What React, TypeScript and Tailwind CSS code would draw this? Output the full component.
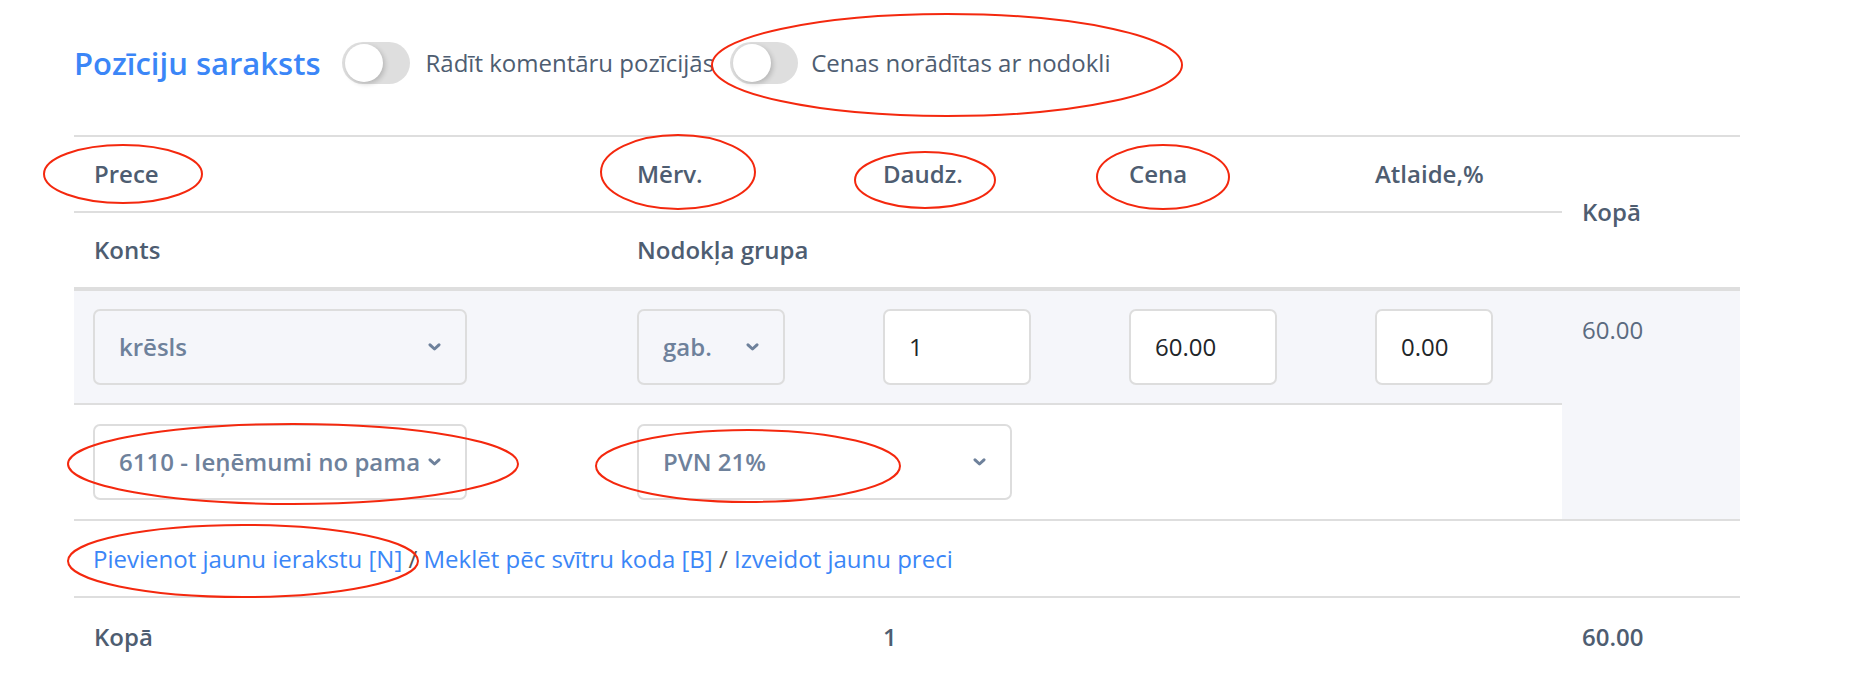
import React from "react";

const Chevron: React.FC = () => (
    <svg width="13" height="8" viewBox="0 0 13 8" className="shrink-0">
        <path d="M2 1.8 L6.5 6 L11 1.8" fill="none" stroke="#6e819b" strokeWidth="3" strokeLinecap="round" strokeLinejoin="round" />
    </svg>
);

const Toggle: React.FC = () => (
    <div className="flex items-center w-[68px] h-[42px] rounded-full bg-[#dedede] pl-[3px] shrink-0">
        <div className="w-[38px] h-[38px] rounded-full bg-white shadow-[2px_2px_5px_rgba(0,0,0,0.18)]" />
    </div>
);

interface SelectProps {
    value: string;
    width: string;
}

const FakeSelect: React.FC<SelectProps> = ({ value, width }) => (
    <div className={`${width} h-[76px] flex items-center justify-between gap-[8px] pl-[24px] pr-[24px] border-2 border-[#dddddd] rounded-[7px] text-[24px] font-semibold text-[#6e819b]`}>
        <span className="whitespace-nowrap">{value}</span>
        <Chevron />
    </div>
);

const FakeInput: React.FC<{ value: string; width: string }> = ({ value, width }) => (
    <div className={`${width} h-[76px] flex items-center pl-[24px] bg-white border-2 border-[#dddddd] rounded-[7px] text-[24px] text-[#212529]`}>
        {value}
    </div>
);

const Annotations: React.FC = () => (
    <svg className="absolute inset-0 pointer-events-none" width="1876" height="674">
        <g fill="none" stroke="#f4280e" strokeWidth="2">
            <ellipse cx="947" cy="65" rx="235" ry="51" />
            <ellipse cx="123" cy="174" rx="79" ry="29" />
            <ellipse cx="678" cy="172" rx="77" ry="37" />
            <ellipse cx="925" cy="180" rx="70" ry="28" />
            <ellipse cx="1163" cy="177" rx="66" ry="32" />
            <ellipse cx="293" cy="464" rx="225" ry="40" />
            <ellipse cx="748" cy="466" rx="152" ry="36" />
            <ellipse cx="243" cy="561" rx="175" ry="36" />
        </g>
    </svg>
);

export default function App() {
    const th = "flex items-center pl-[20px] text-[24px] font-semibold text-[#4e5d71]";
    return (
        <div className="relative w-full h-[674px] bg-white overflow-hidden font-['Open_Sans',sans-serif]">
            <div className="pl-[74px] pt-[41px]">
                <div className="flex items-center h-[44px]">
                    <span className="text-[31px] font-semibold text-[#3b86f7] mr-[21px]">Pozīciju saraksts</span>
                    <Toggle />
                    <span className="ml-[16px] mr-[16px] text-[24px] text-[#4e5d71]">Rādīt komentāru pozīcijās</span>
                    <Toggle />
                    <span className="ml-[13px] text-[24px] text-[#4e5d71]">Cenas norādītas ar nodokli</span>
                </div>

                <div className="mt-[50px] w-[1666px] grid grid-cols-[543px_246px_246px_246px_207px_178px]">
                    {/* header row 1 */}
                    <div className={`${th} h-[78px] border-y-2 border-[#dedede]`}>Prece</div>
                    <div className={`${th} h-[78px] border-y-2 border-[#dedede]`}>Mērv.</div>
                    <div className={`${th} h-[78px] border-y-2 border-[#dedede]`}>Daudz.</div>
                    <div className={`${th} h-[78px] border-y-2 border-[#dedede]`}>Cena</div>
                    <div className={`${th} h-[78px] border-y-2 border-[#dedede]`}>Atlaide,%</div>
                    <div className={`${th} row-span-2 border-t-2 border-b-4 border-[#dedede]`}>Kopā</div>
                    {/* header row 2 */}
                    <div className={`${th} h-[78px] border-b-4 border-[#dedede]`}>Konts</div>
                    <div className={`${th} col-span-4 h-[78px] border-b-4 border-[#dedede]`}>Nodokļa grupa</div>

                    {/* item row 1 */}
                    <div className="h-[114px] pl-[19px] pt-[18px] bg-[#f5f6fa] border-b-2 border-[#dedede]">
                        <FakeSelect value="krēsls" width="w-[374px]" />
                    </div>
                    <div className="h-[114px] pl-[20px] pt-[18px] bg-[#f5f6fa] border-b-2 border-[#dedede]">
                        <FakeSelect value="gab." width="w-[148px]" />
                    </div>
                    <div className="h-[114px] pl-[20px] pt-[18px] bg-[#f5f6fa] border-b-2 border-[#dedede]">
                        <FakeInput value="1" width="w-[148px]" />
                    </div>
                    <div className="h-[114px] pl-[20px] pt-[18px] bg-[#f5f6fa] border-b-2 border-[#dedede]">
                        <FakeInput value="60.00" width="w-[148px]" />
                    </div>
                    <div className="h-[114px] pl-[20px] pt-[18px] bg-[#f5f6fa] border-b-2 border-[#dedede]">
                        <FakeInput value="0.00" width="w-[118px]" />
                    </div>
                    <div className="row-span-2 pl-[20px] pt-[21px] bg-[#f5f6fa] border-b-2 border-[#dedede] text-[24px] text-[#5b6b80]">
                        60.00
                    </div>
                    {/* item row 2 */}
                    <div className="h-[116px] pl-[19px] pt-[19px] border-b-2 border-[#dedede]">
                        <FakeSelect value="6110 - Ieņēmumi no pama" width="w-[374px]" />
                    </div>
                    <div className="col-span-4 h-[116px] pl-[20px] pt-[19px] border-b-2 border-[#dedede]">
                        <FakeSelect value="PVN 21%" width="w-[375px]" />
                    </div>

                    {/* actions */}
                    <div className="col-span-6 h-[77px] flex items-center pl-[19px] border-b-2 border-[#dedede] text-[24px] text-[#555]">
                        <a className="text-[#3b86f7]">Pievienot jaunu ierakstu [N]</a>
                        <span className="whitespace-pre"> / </span>
                        <a className="text-[#3b86f7]">Meklēt pēc svītru koda [B]</a>
                        <span className="whitespace-pre"> / </span>
                        <a className="text-[#3b86f7]">Izveidot jaunu preci</a>
                    </div>

                    {/* totals */}
                    <div className={`${th} h-[78px]`}>Kopā</div>
                    <div className={`${th} h-[78px]`} />
                    <div className={`${th} h-[78px]`}>1</div>
                    <div className={`${th} h-[78px]`} />
                    <div className={`${th} h-[78px]`} />
                    <div className={`${th} h-[78px]`}>60.00</div>
                </div>
            </div>
            <Annotations />
        </div>
    );
}
